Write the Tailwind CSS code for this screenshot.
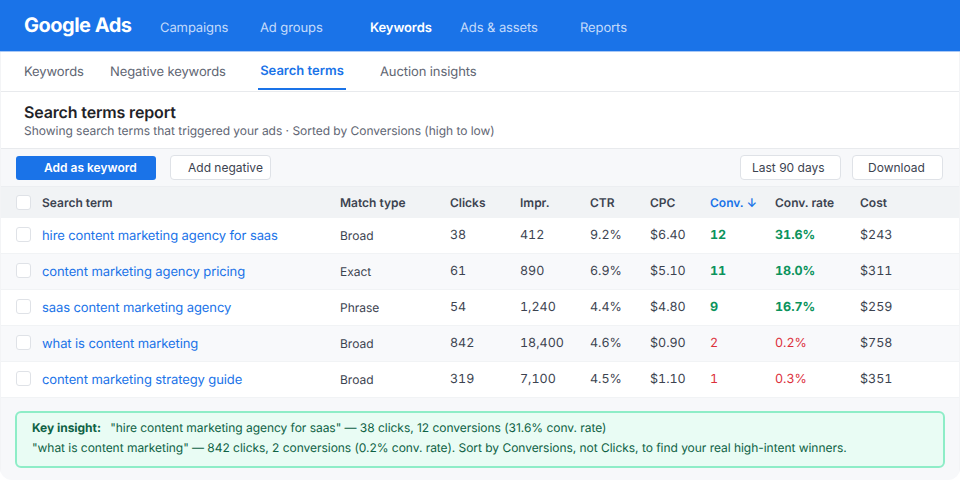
<!doctype html>
<html lang="en"><head><meta charset="utf-8"><script src="https://cdn.jsdelivr.net/npm/@tailwindcss/browser@4"></script></head>
<body class="m-0 bg-white">
<div class="w-[960px] h-[480px] overflow-hidden flex flex-col font-['Inter',sans-serif] [text-rendering:geometricPrecision] antialiased bg-[#f7f8fa] text-[#3c4350] rounded-b-[12px]">
  <header class="h-[52px] shrink-0 bg-[#1a73e8] border-b border-[#a9c8f5] flex items-center pl-6 text-[13px] tracking-[-0.1px] text-[#c4dbfb]">
    <div class="w-[136px] text-[20px] leading-[24px] font-bold text-white -mt-[2px] tracking-[-0.5px]">Google Ads</div>
    <div class="w-[100px] mt-[6px]">Campaigns</div>
    <div class="w-[110px] mt-[6px]">Ad groups</div>
    <div class="w-[90px] mt-[6px] font-semibold text-white">Keywords</div>
    <div class="w-[120px] mt-[6px]">Ads &amp; assets</div>
    <div class="mt-[6px]">Reports</div>
  </header>
  <div class="flex-1 flex flex-col border-x border-[#f3f4f6]">
  <nav class="h-[40px] shrink-0 bg-white border-b border-[#e8eaed] flex pl-[23px] text-[13px] tracking-[-0.1px] text-[#5f6673]">
    <div class="w-[86px] h-full flex items-center pt-[2px]">Keywords</div>
    <div class="w-[150px] h-full flex items-center pt-[2px]">Negative keywords</div>
    <div class="w-[120px] h-full flex items-start"><span class="-ml-[2px] w-[88px] h-[38px] leading-[39px] text-center font-semibold text-[#1a73e8] border-b-2 border-[#1a73e8] tracking-normal">Search terms</span></div>
    <div class="h-full flex items-center pt-[2px]">Auction insights</div>
  </nav>
  <section class="h-[57px] shrink-0 bg-white border-b border-[#e8eaed] pl-[23px] pt-[10px]">
    <h1 class="text-[16px] leading-[20px] font-semibold text-[#1f2328] tracking-[-0.15px]">Search terms report</h1>
    <p class="text-[12px] leading-[18px] text-[#5f6673] tracking-[-0.025px]">Showing search terms that triggered your ads · Sorted by Conversions (high to low)</p>
  </section>
  <div class="h-[38px] shrink-0 bg-[#f7f8fa] border-b border-[#eceef1] flex items-center pl-[15px] pr-4 text-[12px]">
    <button class="w-[140px] h-6 rounded-[3px] bg-[#1a73e8] text-white font-semibold text-left pl-7">Add as keyword</button>
    <button class="ml-[14px] w-[101px] h-[25px] rounded-[4px] bg-white border border-[#dfe2e7] pl-[17px] text-left text-[#3c4350]">Add negative</button>
    <button class="ml-auto w-[101px] h-[25px] rounded-[4px] bg-white border border-[#dfe2e7] pl-[11px] text-left text-[#3c4350]">Last 90 days</button>
    <button class="ml-[11px] w-[91px] h-[25px] rounded-[4px] bg-white border border-[#dfe2e7] pl-[15px] text-left text-[#3c4350]">Download</button>
  </div>
  <div class="grid grid-cols-[26px_298px_110px_70px_70px_60px_60px_65px_85px_100px] h-[31px] shrink-0 items-center bg-[#f1f3f5] pl-[15px] text-[12px] font-semibold text-[#3c4350]">
    <span class="w-[15px] h-[15px] rounded-[3px] bg-white border border-[#dfe2e7]"></span>
    <span>Search term</span><span>Match type</span><span>Clicks</span><span>Impr.</span><span>CTR</span><span>CPC</span>
    <span class="text-[#1a73e8]">Conv. ↓</span><span>Conv. rate</span><span>Cost</span>
  </div>
  <div class="text-[12px] leading-[18px] text-[#3c4350] shrink-0">
    <div class="grid grid-cols-[26px_298px_110px_70px_70px_60px_60px_65px_85px_100px] h-9 items-center bg-white border-b border-[#f1f3f5] pl-[15px]">
      <span class="-mt-[2px] w-[15px] h-[15px] rounded-[3px] bg-white border border-[#dfe2e7]"></span>
      <span class="text-[13px] tracking-[-0.1px] text-[#1a73e8]">hire content marketing agency for saas</span><span>Broad</span><span class="text-[12.5px] tabular-nums">38</span><span class="text-[12.5px] tabular-nums">412</span><span class="text-[12.5px] tabular-nums">9.2%</span><span class="text-[12.5px] tabular-nums">$6.40</span>
      <span class="text-[12.5px] tabular-nums font-bold text-[#0b935c]">12</span><span class="text-[12.5px] tabular-nums font-bold text-[#0b935c]">31.6%</span><span class="text-[12.5px] tabular-nums">$243</span>
    </div>
    <div class="grid grid-cols-[26px_298px_110px_70px_70px_60px_60px_65px_85px_100px] h-9 items-center bg-[#f8f9fb] border-b border-[#f1f3f5] pl-[15px]">
      <span class="-mt-[2px] w-[15px] h-[15px] rounded-[3px] bg-white border border-[#dfe2e7]"></span>
      <span class="text-[13px] tracking-[-0.1px] text-[#1a73e8]">content marketing agency pricing</span><span>Exact</span><span class="text-[12.5px] tabular-nums">61</span><span class="text-[12.5px] tabular-nums">890</span><span class="text-[12.5px] tabular-nums">6.9%</span><span class="text-[12.5px] tabular-nums">$5.10</span>
      <span class="text-[12.5px] tabular-nums font-bold text-[#0b935c]">11</span><span class="text-[12.5px] tabular-nums font-bold text-[#0b935c]">18.0%</span><span class="text-[12.5px] tabular-nums">$311</span>
    </div>
    <div class="grid grid-cols-[26px_298px_110px_70px_70px_60px_60px_65px_85px_100px] h-9 items-center bg-white border-b border-[#f1f3f5] pl-[15px]">
      <span class="-mt-[2px] w-[15px] h-[15px] rounded-[3px] bg-white border border-[#dfe2e7]"></span>
      <span class="text-[13px] tracking-[-0.1px] text-[#1a73e8]">saas content marketing agency</span><span>Phrase</span><span class="text-[12.5px] tabular-nums">54</span><span class="text-[12.5px] tabular-nums">1,240</span><span class="text-[12.5px] tabular-nums">4.4%</span><span class="text-[12.5px] tabular-nums">$4.80</span>
      <span class="text-[12.5px] tabular-nums font-bold text-[#0b935c]">9</span><span class="text-[12.5px] tabular-nums font-bold text-[#0b935c]">16.7%</span><span class="text-[12.5px] tabular-nums">$259</span>
    </div>
    <div class="grid grid-cols-[26px_298px_110px_70px_70px_60px_60px_65px_85px_100px] h-9 items-center bg-[#f8f9fb] border-b border-[#f1f3f5] pl-[15px]">
      <span class="-mt-[2px] w-[15px] h-[15px] rounded-[3px] bg-white border border-[#dfe2e7]"></span>
      <span class="text-[13px] tracking-[-0.1px] text-[#1a73e8]">what is content marketing</span><span>Broad</span><span class="text-[12.5px] tabular-nums">842</span><span class="text-[12.5px] tabular-nums">18,400</span><span class="text-[12.5px] tabular-nums">4.6%</span><span class="text-[12.5px] tabular-nums">$0.90</span>
      <span class="text-[12.5px] tabular-nums text-[#dc2f3a]">2</span><span class="text-[12.5px] tabular-nums text-[#dc2f3a]">0.2%</span><span class="text-[12.5px] tabular-nums">$758</span>
    </div>
    <div class="grid grid-cols-[26px_298px_110px_70px_70px_60px_60px_65px_85px_100px] h-9 items-center bg-white border-b border-[#f1f3f5] pl-[15px]">
      <span class="-mt-[2px] w-[15px] h-[15px] rounded-[3px] bg-white border border-[#dfe2e7]"></span>
      <span class="text-[13px] tracking-[-0.1px] text-[#1a73e8]">content marketing strategy guide</span><span>Broad</span><span class="text-[12.5px] tabular-nums">319</span><span class="text-[12.5px] tabular-nums">7,100</span><span class="text-[12.5px] tabular-nums">4.5%</span><span class="text-[12.5px] tabular-nums">$1.10</span>
      <span class="text-[12.5px] tabular-nums text-[#dc2f3a]">1</span><span class="text-[12.5px] tabular-nums text-[#dc2f3a]">0.3%</span><span class="text-[12.5px] tabular-nums">$351</span>
    </div>
  </div>
  <div class="mx-[14px] mt-[13px] h-[57px] rounded-[6px] border-2 border-[#8eedc7] bg-[#e9fcf4] pl-[15px] pt-[5px] text-[12px] leading-[20px] tracking-[-0.035px] text-[#0f6245]">
    <p><b class="font-bold mr-[6px]">Key insight:</b> "hire content marketing agency for saas" — 38 clicks, 12 conversions (31.6% conv. rate)</p>
    <p>"what is content marketing" — 842 clicks, 2 conversions (0.2% conv. rate). Sort by Conversions, not Clicks, to find your real high-intent winners.</p>
  </div>
  </div>
</div>
</body></html>
